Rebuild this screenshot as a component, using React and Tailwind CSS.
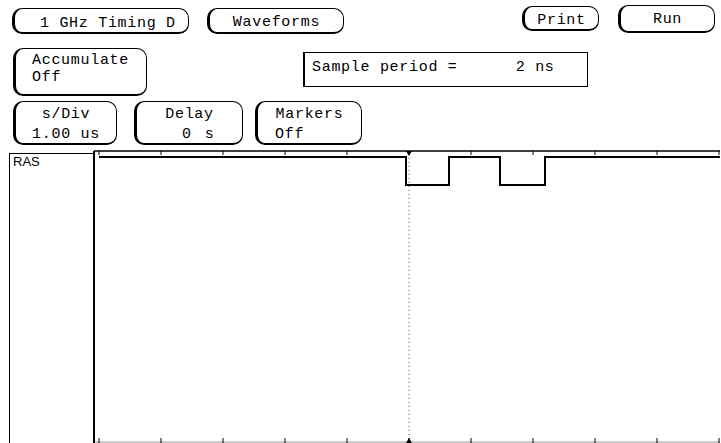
import React from 'react';

const mono = "font-['Liberation_Mono','DejaVu_Sans_Mono',monospace] text-[15px] leading-[17px] tracking-[0.7px] text-black";

// softkey with heavy left/bottom edge like the printed HP screen
const keyBox =
  'border border-black border-l-[3px] border-b-[2px] rounded-[10px] bg-white';

const ticks = Array.from({ length: 11 }, (_, i) => 6 + i * 62);

const WaveChart = () => (
  <svg width="627" height="293" viewBox="0 0 627 293" className="block">
    {/* left axis */}
    <line x1="1" y1="1" x2="1" y2="293" stroke="#000" strokeWidth="2" />
    {/* top grid line */}
    <line x1="1" y1="1" x2="627" y2="1" stroke="#000" strokeWidth="1.5" />
    {/* bottom grid line */}
    <line x1="2" y1="292" x2="627" y2="292" stroke="#9a9a9a" strokeWidth="1" />
    {ticks.map((x) => (
      <g key={x}>
        <line x1={x} y1="1" x2={x} y2="5" stroke="#000" strokeWidth="1" />
        <line x1={x} y1="288" x2={x} y2="293" stroke="#000" strokeWidth="1" />
      </g>
    ))}
    {/* cursor */}
    <line
      x1="316"
      y1="4"
      x2="316"
      y2="290"
      stroke="#555"
      strokeWidth="1"
      strokeDasharray="1 3"
    />
    <polygon points="313,1 319,1 316,6" fill="#000" />
    <polygon points="313,293 319,293 316,288" fill="#000" />
    {/* RAS waveform */}
    <path
      d="M6 7 H313 V35 H356 V7 H407 V35 H452 V7 H627"
      fill="none"
      stroke="#000"
      strokeWidth="2"
    />
  </svg>
);

export default function App() {
  return (
    <div className={`w-[721px] h-[443px] bg-white overflow-hidden ${mono}`}>
      {/* top row */}
      <div className="flex items-start h-[48px]">
        <div className={`${keyBox} ml-[12px] mt-[8px] w-[177px] h-[26px] pt-[6px] pl-[25px] whitespace-pre`}>
          1 GHz Timing D
        </div>
        <div className={`${keyBox} ml-[18px] mt-[8px] w-[137px] h-[26px] pt-[5px] text-center`}>
          Waveforms
        </div>
        <div className={`${keyBox} ml-[178px] mt-[6px] w-[77px] h-[25px] pt-[5px] text-center`}>
          Print
        </div>
        <div className={`${keyBox} ml-[19px] mt-[5px] w-[97px] h-[28px] pt-[5px] text-center`}>
          Run
        </div>
      </div>

      {/* second row */}
      <div className="flex items-start h-[53px]">
        <div className={`${keyBox} ml-[13px] w-[134px] h-[48px] pt-[3px] pl-[16px]`}>
          <div>Accumulate</div>
          <div>Off</div>
        </div>
        <div className="ml-[156px] mt-[4px] w-[285px] h-[35px] border border-black border-l-2 pt-[6px] pl-[7px] whitespace-pre">
          Sample period =      2 ns
        </div>
      </div>

      {/* third row */}
      <div className="flex items-start h-[49px] leading-[20px]">
        <div className={`${keyBox} ml-[13px] w-[104px] h-[44px] pt-[3px] text-center`}>
          <div>s/Div</div>
          <div>1.00 us</div>
        </div>
        <div className={`${keyBox} ml-[17px] w-[109px] h-[44px] pt-[3px]`}>
          <div className="text-center">Delay</div>
          <div className="pl-[45px]">
            <span>0</span>
            <span className="ml-[13px]">s</span>
          </div>
        </div>
        <div className={`${keyBox} ml-[12px] w-[107px] h-[44px] pt-[3px]`}>
          <div className="text-center">Markers</div>
          <div className="pl-[17px]">Off</div>
        </div>
      </div>

      {/* waveform area */}
      <div className="flex h-[293px]">
        <div className="ml-[9px] mt-[3px] w-[84px] border-l border-t border-black pl-[3px] pt-[1px] font-['Liberation_Sans',Arial,sans-serif] text-[13px] leading-[14px] tracking-normal">
          RAS
        </div>
        <WaveChart />
      </div>
    </div>
  );
}
